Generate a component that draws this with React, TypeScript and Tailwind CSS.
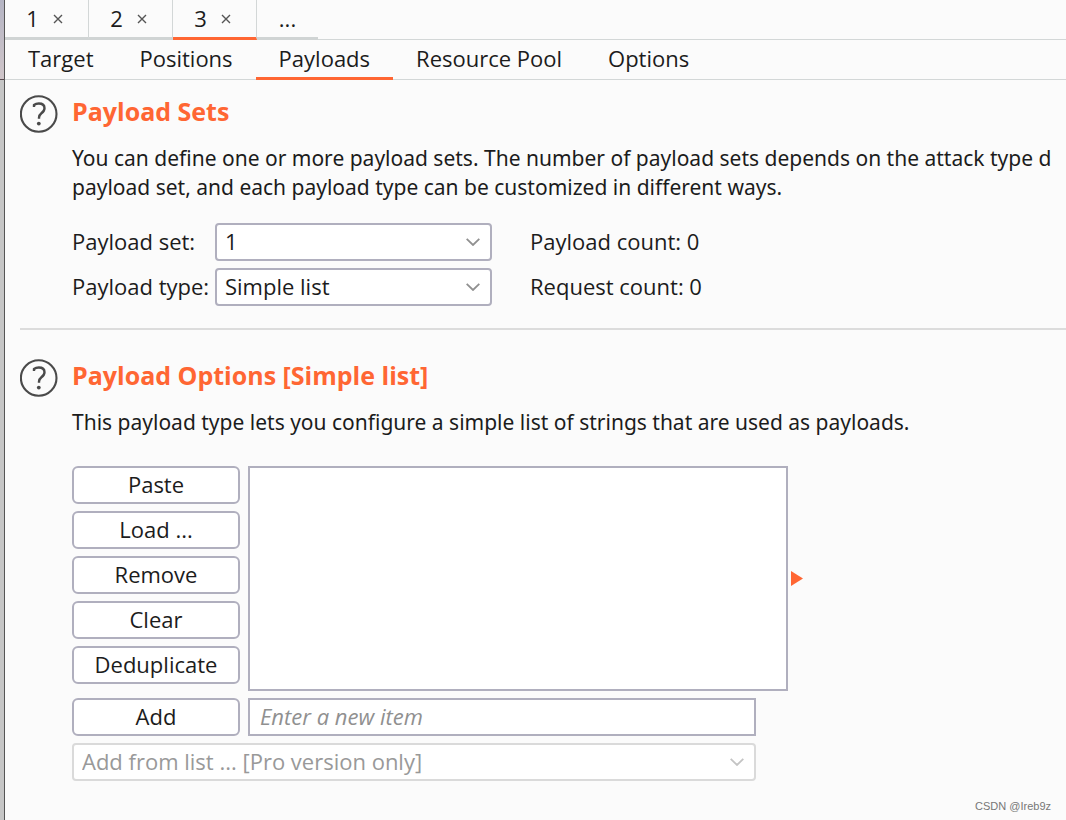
import React, { useState } from "react";

const attempts = ["1", "2", "3"];
const sections = ["Target", "Positions", "Payloads", "Resource Pool", "Options"];
const listActions = ["Paste", "Load ...", "Remove", "Clear", "Deduplicate"];

function HelpIcon() {
  return (
    <button type="button" aria-label="Help" className="size-[38px] shrink-0">
      <svg viewBox="0 0 38 38" className="size-[38px]" fill="none" stroke="#4a4a4a">
        <circle cx="18.7" cy="19" r="17.8" strokeWidth="2.1" />
        <path
          d="M14 12.1V10c1.3-1 2.9-1.5 4.8-1.5 3.5 0 5.7 1.8 5.7 4.7 0 2.4-1.3 3.7-3.1 5.1-1.8 1.4-2.4 2.3-2.4 4.5v.9"
          strokeWidth="2.4"
        />
        <circle cx="18.8" cy="28.6" r="1.9" fill="#4a4a4a" stroke="none" />
      </svg>
    </button>
  );
}

function Dropdown({
  id,
  options,
  label,
  disabled = false,
}: {
  id: string;
  options: string[];
  label?: string;
  disabled?: boolean;
}) {
  return (
    <div className="grid">
      <select
        id={id}
        aria-label={label}
        disabled={disabled}
        className="col-start-1 row-start-1 h-[38px] w-full appearance-none rounded border-2 border-[#b0afbe] bg-white pr-10 pb-0.5 pl-2 opacity-100 disabled:border-[#dadada] disabled:text-[#999]"
      >
        {options.map((option) => (
          <option key={option}>{option}</option>
        ))}
      </select>
      <svg
        viewBox="0 0 14 8"
        className={`pointer-events-none col-start-1 row-start-1 mr-3 h-2 w-3.5 self-center justify-self-end ${disabled ? "text-[#c4c4c4]" : "text-[#909090]"}`}
        fill="none"
        stroke="currentColor"
        strokeWidth="1.8"
      >
        <path d="M.7.8 7 7 13.3.8" />
      </svg>
    </div>
  );
}

function ActionButton({ children }: { children: React.ReactNode }) {
  return (
    <button
      type="button"
      className="h-[38px] w-full rounded-md border-2 border-[#b0afbe] bg-white pb-0.5 leading-none"
    >
      {children}
    </button>
  );
}

export default function App() {
  const [attempt, setAttempt] = useState("3");
  const [section, setSection] = useState("Payloads");

  return (
    <div className="flex min-h-screen overflow-hidden bg-[#fbfbfb] font-['Open_Sans','Noto_Sans',sans-serif] text-[22px] leading-[29px] text-[#1c1c1c]">
      <div className="flex w-[5px] shrink-0 flex-col border-r border-[#555]">
        <div className="h-20 border-b border-[#5a4a50] bg-linear-to-b from-[#b5b5c4] to-[#cfc5c9]" />
        <div className="grow bg-[#c6c6c6]" />
      </div>
      <div className="flex min-w-0 grow flex-col">
        <nav aria-label="Attacks" className="flex h-10 border-b border-[#d3d7d7]">
          {attempts.map((name) => (
            <div
              key={name}
              className={`flex h-10 w-[84px] shrink-0 items-center justify-center gap-3.5 border-r border-r-[#d3d7d7] border-b-3 pr-1 ${name === attempt ? "border-b-[#ff6633]" : "border-b-[#d0d4d4]"}`}
            >
              <button type="button" onClick={() => setAttempt(name)}>
                {name}
              </button>
              <button type="button" aria-label={`Close ${name}`}>
                <svg viewBox="0 0 10 10" className="size-2.5" stroke="#555" strokeWidth="1.4">
                  <path d="m1 1 8 8M9 1 1 9" />
                </svg>
              </button>
            </div>
          ))}
          <button type="button" className="h-10 w-[61px] border-b-3 border-[#d0d4d4]">
            ...
          </button>
        </nav>
        <nav aria-label="Sections" className="flex h-10 border-b border-[#d3d7d7]">
          {sections.map((name) => (
            <button
              key={name}
              type="button"
              onClick={() => setSection(name)}
              className={`h-10 shrink-0 border-b-3 px-[23px] ${name === section ? "border-[#ff6633]" : "border-transparent"}`}
            >
              {name}
            </button>
          ))}
        </nav>
        <main className="grow pl-[15px]">
          <section className="flex gap-3.5 border-b-2 border-[#dcdcdc] pt-[15px] pb-[22px]">
            <HelpIcon />
            <div className="min-w-0">
              <h2 className="pt-0.5 text-[25px] font-bold text-[#ff6633]">Payload Sets</h2>
              <p className="mt-[18px] font-['Noto_Sans',sans-serif] text-[21px] whitespace-nowrap">
                You can define one or more payload sets. The number of payload sets depends on the attack type d
                <br />
                payload set, and each payload type can be customized in different ways.
              </p>
              <div className="mt-[21px] grid grid-cols-[143px_277px_auto] items-center gap-y-[7px]">
                <label htmlFor="payload-set" className="pb-0.5">Payload set:</label>
                <Dropdown id="payload-set" options={["1"]} />
                <span className="pb-0.5 pl-[38px]">Payload count: 0</span>
                <label htmlFor="payload-type" className="pb-0.5">Payload type:</label>
                <Dropdown id="payload-type" options={["Simple list"]} />
                <span className="pb-0.5 pl-[38px]">Request count: 0</span>
              </div>
            </div>
          </section>
          <section className="flex gap-3.5 pt-[29px]">
            <HelpIcon />
            <div>
              <h2 className="pt-0.5 text-[25px] font-bold text-[#ff6633]">Payload Options [Simple list]</h2>
              <p className="mt-[18px] font-['Noto_Sans',sans-serif] text-[21px]">
                This payload type lets you configure a simple list of strings that are used as payloads.
              </p>
              <div className="mt-[29px] flex gap-2">
                <div className="flex w-[168px] flex-col gap-[7px]">
                  {listActions.map((action) => (
                    <ActionButton key={action}>{action}</ActionButton>
                  ))}
                </div>
                <div className="flex items-center gap-[3px]">
                  <ul aria-label="Payloads" className="h-[225px] w-[540px] border-2 border-[#b0afbe] bg-white" />
                  <svg viewBox="0 0 12 15" className="h-[15px] w-3" fill="#ff6633">
                    <path d="M0 0 12 7.5 0 15Z" />
                  </svg>
                </div>
              </div>
              <div className="mt-[7px] flex w-[684px] gap-2">
                <div className="w-[168px]">
                  <ActionButton>Add</ActionButton>
                </div>
                <input
                  aria-label="New item"
                  placeholder="Enter a new item"
                  className="h-[38px] min-w-0 grow border-2 border-[#b0afbe] bg-white px-2.5 pb-0.5 placeholder:text-[#909090] placeholder:italic"
                />
              </div>
              <div className="mt-[7px] w-[684px]">
                <Dropdown
                  id="preset-list"
                  label="Add from list"
                  options={["Add from list ... [Pro version only]"]}
                  disabled
                />
              </div>
            </div>
          </section>
        </main>
        <footer className="pr-[15px] pb-1 text-right font-['Liberation_Sans',sans-serif] text-[11px] leading-5 text-[#777]">
          CSDN @Ireb9z
        </footer>
      </div>
    </div>
  );
}
